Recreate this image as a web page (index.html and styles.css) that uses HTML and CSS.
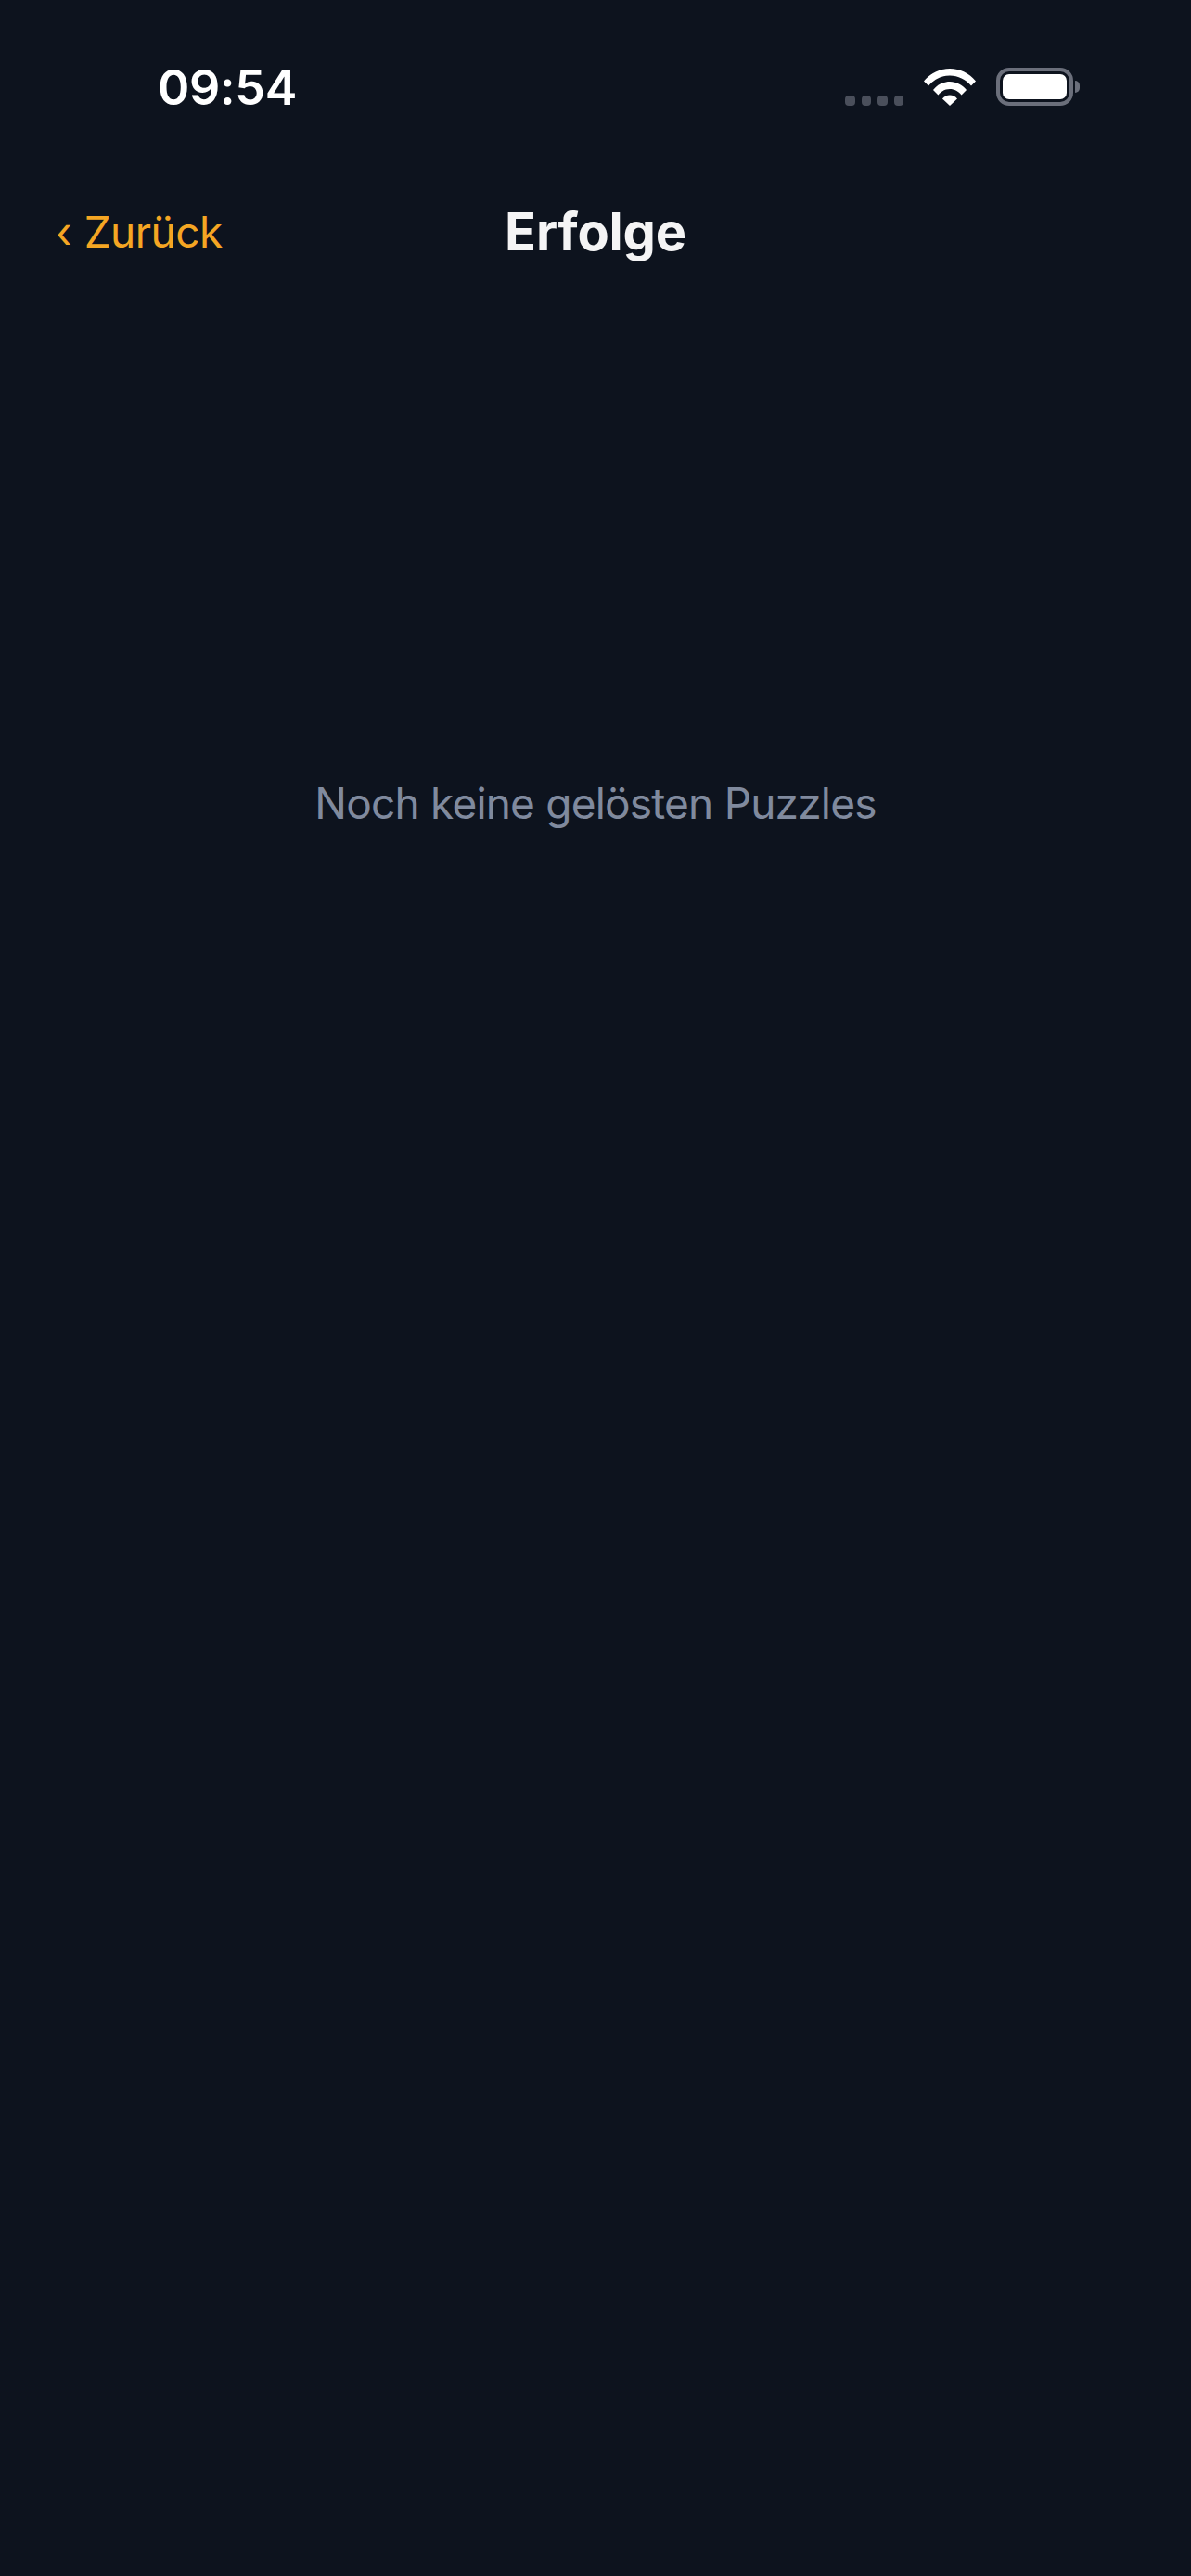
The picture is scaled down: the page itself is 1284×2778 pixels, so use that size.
FILE: index.html
```html
<!DOCTYPE html>
<html lang="de">
<head>
  <meta charset="utf-8">
  <title>Erfolge</title>
  <link rel="stylesheet" href="styles.css">
</head>
<body>
  <div class="screen">
    <header class="status-bar">
      <div class="time">09:54</div>
      <div class="status-icons">
        <div class="signal">
          <span class="dot"></span>
          <span class="dot"></span>
          <span class="dot"></span>
          <span class="dot"></span>
        </div>
        <svg class="wifi" width="56" height="41" viewBox="0 0 56 41">
          <path d="M0 14.5C7 6 17 1 28 1s21 5 28 13.5l-5 5C45 12.5 37 8.500 28 8.500S11 12.500 5 19.500z" fill="#fff"/>
          <path d="M10 24C14.500 18.500 21 15 28 15s13.500 3.500 18 9l-5.500 5.500C37.500 25.500 33 23 28 23s-9.500 2.500-12.500 6.500z" fill="#fff"/>
          <path d="M20 33.500C22 31 25 29.500 28 29.500s6 1.500 8 4L28 41z" fill="#fff"/>
        </svg>
        <div class="battery">
          <div class="battery-body"><div class="battery-fill"></div></div>
          <div class="battery-cap"></div>
        </div>
      </div>
    </header>

    <nav class="nav-bar">
      <a class="back"><span class="chevron">‹</span> Zurück</a>
      <h1 class="title">Erfolge</h1>
      <div class="nav-spacer"></div>
    </nav>

    <main class="content">
      <p class="empty">Noch keine gelösten Puzzles</p>
    </main>
  </div>
</body>
</html>
```

FILE: styles.css
```css
html, body {
  margin: 0;
  padding: 0;
  background-color: #0d131e;
}

.screen {
  display: flex;
  flex-direction: column;
  height: 2778px;
  overflow: hidden;
  font-family: Inter, "Liberation Sans", sans-serif;
}

.status-bar {
  display: flex;
  justify-content: space-between;
  align-items: flex-start;
  height: 190px;
  padding: 0 120px 0 170px;
  box-sizing: border-box;
}

.time {
  margin-top: 63px;
  font-size: 52px;
  line-height: 63px;
  font-weight: 600;
  letter-spacing: -0.3px;
  color: #fff;
}

.status-icons {
  display: flex;
  align-items: flex-start;
  margin-top: 73px;
}

.signal {
  display: flex;
  gap: 7px;
  margin-top: 30px;
  margin-right: 22px;
}

.dot {
  width: 10.500px;
  height: 10.500px;
  border-radius: 4px;
  background-color: #4a4f5b;
}

.wifi {
  display: block;
  margin-right: 22px;
}

.battery {
  display: flex;
  align-items: center;
}

.battery-body {
  width: 83px;
  height: 41px;
  padding: 3px;
  box-sizing: border-box;
  border: 4px solid #6b6f7b;
  border-radius: 14px;
}

.battery-fill {
  height: 100%;
  border-radius: 7px;
  background-color: #fff;
}

.battery-cap {
  width: 5px;
  height: 13px;
  margin-left: 2px;
  border-radius: 0 6px 6px 0;
  background-color: #6b6f7b;
}

.nav-bar {
  display: grid;
  grid-template-columns: 1fr auto 1fr;
  align-items: center;
  padding: 0 60px;
  height: 120px;
}

.back {
  font-size: 46px;
  letter-spacing: -0.5px;
  color: #f5a623;
}

.chevron {
  margin-right: 1px;
}

.title {
  margin: 0;
  font-size: 56px;
  font-weight: 700;
  letter-spacing: -0.2px;
  color: #f4f4f5;
}

.content {
  display: flex;
  justify-content: center;
  padding-top: 528px;
}

.empty {
  margin: 0;
  font-size: 46px;
  line-height: 56px;
  letter-spacing: -0.8px;
  color: #808a9e;
}
```
